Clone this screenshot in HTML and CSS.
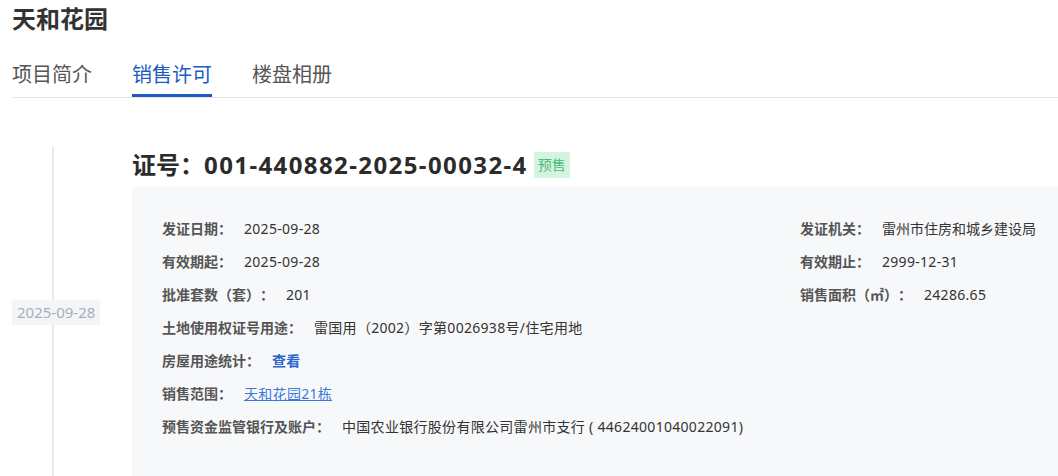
FILE: index.html
```html
<!DOCTYPE html>
<html lang="zh-CN">

<head>
  <meta charset="UTF-8">
  <meta name="viewport" content="width=device-width, initial-scale=1.0">
  <title>天和花园 - 销售许可</title>

  <link rel="stylesheet" href="styles.css">
</head>

<body>
  <div class="page">
    <h1 class="title">天和花园</h1>

    <div class="tabs">
      <a class="tab">项目简介</a>
      <a class="tab active">销售许可</a>
      <a class="tab">楼盘相册</a>
    </div>

    <div class="timeline">
      <div class="timelineItem">
        <div class="timelineSide">
          <span class="timelineDate">2025-09-28</span>
        </div>

        <div class="timelineBody">
          <div class="permitHead">
            <h2>证号：<span class="permitNo">001-440882-2025-00032-4</span></h2>
            <span class="badge">预售</span>
          </div>

          <div class="permitBox">
            <div class="permitCol">
              <div class="row"><span class="label">发证日期：</span><span class="value">2025-09-28</span></div>
              <div class="row"><span class="label">有效期起：</span><span class="value">2025-09-28</span></div>
              <div class="row"><span class="label">批准套数（套）：</span><span class="value">201</span></div>
              <div class="row"><span class="label">土地使用权证号用途：</span><span class="value">雷国用（2002）字第0026938号/住宅用地</span></div>
              <div class="row"><span class="label">房屋用途统计：</span><a class="value more">查看</a></div>
              <div class="row"><span class="label">销售范围：</span><a class="value link">天和花园21栋</a></div>
              <div class="row"><span class="label">预售资金监管银行及账户：</span><span class="value">中国农业银行股份有限公司雷州市支行 ( 44624001040022091)</span></div>
            </div>

            <div class="permitCol">
              <div class="row"><span class="label">发证机关：</span><span class="value plain">雷州市住房和城乡建设局</span></div>
              <div class="row"><span class="label">有效期止：</span><span class="value">2999-12-31</span></div>
              <div class="row"><span class="label">销售面积（<span class="unit">㎡</span>）：</span><span class="value">24286.65</span></div>
            </div>
          </div>
        </div>
      </div>
    </div>
  </div>
</body>

</html>
```

FILE: styles.css
```css
body,
html {
  font-family: 'Noto Sans', 'Noto Sans CJK SC', sans-serif;
  background-color: #fff;
  color: #333;

  padding: 0;
  margin: 0;
  overflow: hidden;

  text-spacing-trim: space-all;
}

* {
  box-sizing: border-box;
}

.page {
  padding: 3px 0 0 12px;
}

.title {
  font-size: 24px;
  line-height: 32px;
  font-weight: bold;
  margin: 0;

  color: #333;
}

.tabs {
  display: flex;
  gap: 40px;

  margin-top: 26px;
  border-bottom: 1px solid #e4e6ea;
}

.tab {
  font-size: 20px;
  line-height: 28px;
  padding-bottom: 5px;

  color: #555;
  border-bottom: 3px solid transparent;
  cursor: pointer;
}

.tab.active {
  color: #1d5bbf;
  border-bottom-color: #1d5bbf;
}

.timeline {
  margin-top: 49px;
  margin-left: -12px;
}

.timelineItem {
  display: flex;
}

.timelineSide {
  position: relative;
  width: 132px;
  flex-shrink: 0;

  display: flex;
  align-items: flex-start;
  padding-left: 12px;
}

.timelineSide::before {
  content: '';
  position: absolute;
  left: 52px;
  top: 0;
  bottom: 0;
  width: 2px;
  background-color: #e6e8eb;
}

.timelineDate {
  position: relative;
  margin-top: 153px;

  font-size: 15px;
  line-height: 25px;
  padding: 0 5px;

  color: #a9afb8;
  background-color: #f3f5f8;
}

.timelineBody {
  flex: 1;
  padding-top: 3px;
}

.permitHead {
  display: flex;
  align-items: center;
  gap: 6px;

  height: 30px;
  margin-bottom: 7px;
}

.permitHead h2 {
  font-size: 24px;
  line-height: 30px;
  font-weight: bold;
  margin: 0;

  color: #2b2b2b;
}

.permitNo {
  letter-spacing: 1.4px;
}

.badge {
  font-size: 14px;
  line-height: 26px;
  padding: 0 4px;

  color: #4fb97c;
  background-color: #d3f5df;
}

.permitBox {
  display: grid;
  grid-template-columns: 1fr auto;

  min-height: 300px;
  padding: 31px 22px 40px 30px;

  background-color: #f7f8fa;
}

.permitCol {
  display: flex;
  flex-direction: column;
  gap: 12px;
}

.row {
  display: flex;
  gap: 12px;

  font-size: 14px;
  line-height: 21px;
  white-space: nowrap;
}

.label {
  color: #555;
  font-weight: bold;
}

.unit {
  display: inline-block;
  width: 14px;
  text-align: center;
}

.value {
  color: #333;
  letter-spacing: 0.3px;
}

.value.plain {
  letter-spacing: 0;
}

.more {
  color: #2a67cf;
  font-weight: bold;
  cursor: pointer;
}

.link {
  color: #3c78dc;
  text-decoration: underline;
  cursor: pointer;
}
```
